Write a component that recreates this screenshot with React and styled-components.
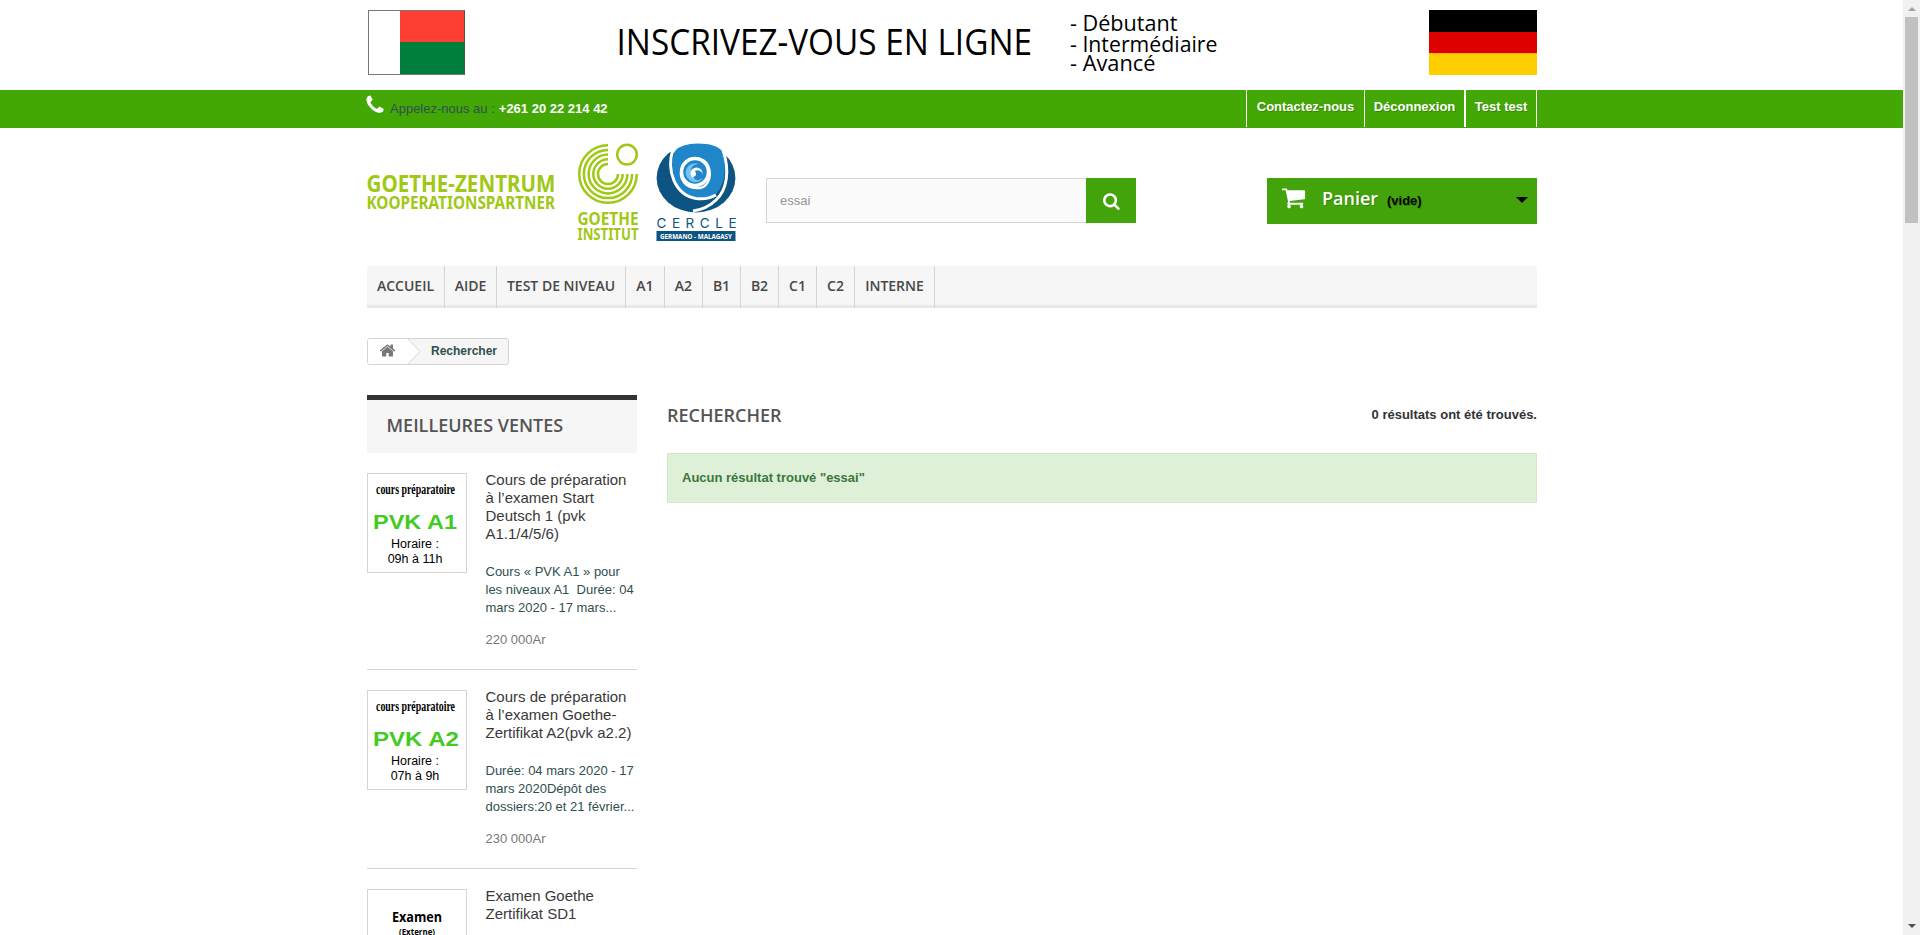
import React from "react";
import styled, { createGlobalStyle } from "styled-components";

const sans = `"Liberation Sans", Arial, Helvetica, sans-serif`;
const display = `"Open Sans", "Noto Sans", sans-serif`;

const GlobalStyle = createGlobalStyle`
  * { box-sizing: border-box; }
  body { margin: 0; background: #fff; font: normal 13px/18px ${sans}; color: #2f4f4f; overflow: hidden; }
  h1, h2, h3, p, ul { margin: 0; padding: 0; font-weight: normal; }
  svg { display: block; }
`;

const Viewport = styled.div`
  display: flex;
  height: 935px;
  overflow: hidden;
`;
const Page = styled.div`
  flex: 1;
  min-width: 0;
`;
const Container = styled.div`
  width: 1170px;
  margin-left: 367px;
`;

/* Banner */
const BannerRow = styled(Container)`
  display: flex;
  height: 90px;
  padding: 10px 0 0 1px;
`;
const MadagascarFlag = styled.div`
  width: 97px;
  height: 65px;
  border: 1px solid #777;
  border-right-color: #3f5f3a;
  background: linear-gradient(#ff3f34 50%, #007f3c 50%) 31px 0 no-repeat #fff;
`;
const GermanFlag = styled.div`
  width: 108px;
  height: 65px;
  margin-left: auto;
  background: linear-gradient(#000 0 22px, #de0000 22px 43px, #ffb400 43px 44px, #ffce00 44px);
`;
const BannerText = styled.svg`
  width: 620px;
  height: 75px;
  margin-left: 146px;
  overflow: visible;
  font-family: "Open Sans", "Noto Sans", sans-serif;
`;

/* Top bar */
const TopBar = styled.div`
  height: 38px;
  background: #43a705;
`;
const TopBarRow = styled(Container)`
  display: flex;
  justify-content: space-between;
`;
const Phone = styled.div`
  display: flex;
  height: 38px;
  line-height: 38px;
  svg { margin: 4px 4px 0 -3px; }
  b { margin-left: 4px; color: #fff; }
`;
const UserLinks = styled.nav`
  display: flex;
  height: 37px;
  border-left: 1px solid #fff;
`;
const UserLink = styled.a`
  width: ${(p) => p.$width}px;
  border-right: ${(p) => p.$edge || 1}px solid #fff;
  color: #fff;
  font-weight: bold;
  line-height: 33px;
  text-align: center;
  white-space: nowrap;
  text-shadow: 1px 1px rgba(0, 0, 0, 0.2);
`;

/* Header */
const HeaderRow = styled(Container)`
  display: flex;
  height: 138px;
`;
const Logo = styled.svg`
  width: 375px;
  height: 104px;
  margin-top: 12px;
  font-family: "Noto Sans", "Open Sans", sans-serif;
`;
const SearchForm = styled.div`
  display: flex;
  width: 370px;
  height: 45px;
  margin: 50px 0 0 24px;
`;
const SearchField = styled.div`
  flex: 1;
  padding-left: 13px;
  border: 1px solid #d6d4d4;
  border-right: 0;
  background: #fbfbfb;
  color: #959595;
  line-height: 43px;
`;
const SearchButton = styled.div`
  display: flex;
  align-items: center;
  justify-content: center;
  width: 50px;
  padding-left: 2px;
  background: #43a30a;
`;
const Cart = styled.div`
  display: flex;
  align-items: flex-start;
  width: 270px;
  height: 46px;
  margin: 50px 0 0 auto;
  padding: 0 9px 0 14px;
  background: #43a30a;
  text-shadow: 1px 1px rgba(0, 0, 0, 0.2);
`;
const CartIcon = styled.div`
  width: 41px;
  padding-top: 7px;
`;
const CartTitle = styled.b`
  width: 65px;
  color: #fff;
  font: 600 18px/40px ${display};
`;
const CartStatus = styled.b`
  flex: 1;
  color: #000;
  line-height: 45px;
`;
const Caret = styled.div`
  margin-top: 19px;
  border: 6px solid transparent;
  border-top: 6px solid #000;
  border-bottom: 0;
`;

/* Menu */
const Menu = styled(Container)`
  display: flex;
  height: 42px;
  background: #f6f6f6;
  box-shadow: inset 0 -3px #e9e9e9;
`;
const MenuItem = styled.a`
  width: ${(p) => p.$width}px;
  border-right: 1px solid #d6d4d4;
  color: #484848;
  font: 600 14px/40px ${display};
  text-align: center;
  white-space: nowrap;
`;

/* Breadcrumb */
const Crumbs = styled.div`
  display: flex;
  width: 142px;
  height: 27px;
  margin: 30px 0 0 367px;
  overflow: hidden;
  border: 1px solid #d6d4d4;
  border-radius: 3px;
  background: #f6f6f6;
`;
const HomeCrumb = styled.div`
  display: flex;
  width: 40px;
  padding: 3px 0 0 11px;
  background: #fff;
`;
const CurrentCrumb = styled.b`
  margin-left: 10px;
  font-size: 12px;
  line-height: 25px;
`;

/* Columns */
const Columns = styled(Container)`
  display: grid;
  grid-template-columns: 270px 870px;
  gap: 30px;
  margin-top: 30px;
`;
const BlockTitle = styled.h2`
  height: 58px;
  margin-bottom: 20px;
  padding-left: 19.5px;
  border-top: 5px solid #333;
  background: #f6f6f6;
  color: #555454;
  font: 600 18px/51px ${display};
`;
const Product = styled.article`
  display: flex;
  gap: 18.5px;
  margin-bottom: 20px;
  padding-bottom: 20px;
  border-bottom: 1px solid #d6d4d4;
`;
const Thumb = styled.svg`
  flex: none;
  width: 100px;
  height: 100px;
  border: 1px solid #d6d4d4;
`;
const ProductInfo = styled.div`
  width: 151px;
  margin-top: -2px;
  white-space: nowrap;
`;
const ProductTitle = styled.h3`
  margin-bottom: 20px;
  color: #3a3939;
  font-size: 15px;
  line-height: 18px;
`;
const ProductText = styled.p`
  margin-bottom: 14px;
  white-space: pre;
`;
const Price = styled.p`
  color: #777;
`;
const Heading = styled.div`
  display: flex;
  justify-content: space-between;
  height: 58px;
`;
const HeadingTitle = styled.h1`
  color: #555454;
  font: 600 18px/41px ${display};
`;
const HeadingCount = styled.b`
  color: #333;
  line-height: 39px;
`;
const Alert = styled.p`
  height: 50px;
  padding-left: 14px;
  border: 1px solid #d6e9c6;
  background: #dff0d8;
  color: #3c763d;
  font-weight: bold;
  line-height: 47px;
`;

/* Scrollbar */
const Scrollbar = styled.div`
  display: flex;
  flex-direction: column;
  align-items: center;
  width: 17px;
  padding: 7px 0;
  background: #f1f1f1;
`;
const ScrollThumb = styled.div`
  width: 13px;
  height: 206px;
  margin: 6px 0 auto;
  background: #c1c1c1;
`;
const ArrowUp = styled.div`
  border: 4px solid transparent;
  border-top: 0;
  border-bottom-color: #a3a3a3;
`;
const ArrowDown = styled.div`
  border: 4px solid transparent;
  border-bottom: 0;
  border-top-color: #505050;
`;

const ICONS = {
  phone: "M1600 1240q0 27-10 70.5t-21 68.5q-21 50-122 106-94 51-186 51-27 0-53-3.5t-57.5-12.5-47-14.5-55.5-20.5-49-18q-98-35-175-83-127-79-264-216t-216-264q-48-77-83-175-3-9-18-49t-20.5-55.5-14.5-47-12.5-57.5-3.5-53q0-92 51-186 56-101 106-122 25-11 68.5-21t70.5-10q14 0 21 3 18 6 53 76 11 19 30 54t35 63.5 31 53.5q3 4 17.5 25t21.5 35.5 7 28.5q0 20-28.5 50t-62 55-62 53-28.5 46q0 9 5 22.5t8.5 20.5 14 24 11.5 19q76 137 174 235t235 174q2 1 19 11.5t24 14 20.5 8.5 22.5 5q18 0 46-28.5t53-62 55-62 50-28.5q14 0 28.5 7t35.5 21.5 25 17.5q25 15 53.5 31t63.5 35 54 30q70 35 76 53 3 7 3 21z",
  search: "M1152 832q0-185-131.5-316.5t-316.5-131.5-316.5 131.5-131.5 316.5 131.5 316.5 316.5 131.5 316.5-131.5 131.5-316.5zm512 832q0 52-38 90t-90 38q-54 0-90-38l-343-342q-179 124-399 124-143 0-273.5-55.5t-225-150-150-225-55.5-273.5 55.5-273.5 150-225 225-150 273.5-55.5 273.5 55.5 225 150 150 225 55.5 273.5q0 220-124 399l343 343q37 37 37 90z",
  home: "M1472 992v480q0 26-19 45t-45 19h-384v-384h-256v384h-384q-26 0-45-19t-19-45v-480q0-1 .5-3t.5-3l575-474 575 474q1 2 1 6zm223-69l-62 74q-8 9-21 11h-3q-13 0-21-7l-692-577-692 577q-12 8-24 7-13-2-21-11l-62-74q-8-10-7-23.5t11-21.5l719-599q32-26 76-26t76 26l244 204v-195q0-14 9-23t23-9h192q14 0 23 9t9 23v408l219 182q10 8 11 21.5t-7 23.5z",
  cart: "M704 1536q0 52-38 90t-90 38-90-38-38-90 38-90 90-38 90 38 38 90zm896 0q0 52-38 90t-90 38-90-38-38-90 38-90 90-38 90 38 38 90zm128-1088v512q0 24-16.5 42.5t-40.5 21.5l-1044 122q13 60 13 70 0 16-24 64h920q26 0 45 19t19 45-19 45-45 19h-1024q-26 0-45-19t-19-45q0-11 8-31.5t16-36 21.5-40 15.5-29.5l-177-823h-204q-26 0-45-19t-19-45 19-45 45-19h256q16 0 28.5 6.5t19.5 15.5 13 24.5 8 26 5.5 29.5 4.5 26h1201q26 0 45 19t19 45z",
};

const Icon = ({ name, size, color = "#fff" }) => (
  <svg width={size} height={size} viewBox="0 0 1792 1792" fill={color}>
    <path d={ICONS[name]} />
  </svg>
);

const FitText = ({ width, children, ...rest }) => (
  <text textLength={width} lengthAdjust="spacingAndGlyphs" {...rest}>{children}</text>
);

const BannerSlogan = () => (
  <BannerText viewBox="0 0 620 75">
    <FitText x="5.5" y="45" fontSize="36" width="415.5">INSCRIVEZ-VOUS EN LIGNE</FitText>
    <FitText x="459" y="21" fontSize="22.5" width="107.5">- Débutant</FitText>
    <FitText x="459" y="42" fontSize="22.5" width="147.5">- Intermédiaire</FitText>
    <FitText x="459" y="61" fontSize="22.5" width="85.5">- Avancé</FitText>
  </BannerText>
);

const ShopLogo = () => (
  <Logo viewBox="0 0 375 104">
    <g fill="#a0c814" fontWeight="700">
      <FitText x="-0.5" y="52" fontSize="23" width="189">GOETHE-ZENTRUM</FitText>
      <FitText x="-0.5" y="68.5" fontSize="17.5" width="188.5">KOOPERATIONSPARTNER</FitText>
      <FitText x="210.5" y="84.5" fontSize="17" width="61">GOETHE</FitText>
      <FitText x="210.5" y="100" fontSize="16" width="61">INSTITUT</FitText>
    </g>
    <g fill="none" stroke="#a0c814" strokeWidth="2.5">
      {[10, 14.7, 19.4, 24.1, 28.8].map((r) => (
        <path key={r} d={`M241 ${34 - r}A${r} ${r} 0 1 0 ${241 + r} 34`} />
      ))}
      <circle cx="260" cy="14.6" r="9.8" />
    </g>
    <ellipse cx="329" cy="38" rx="39.4" ry="34.5" fill="#0e5482" />
    <path d="M298 0h63v11l-5 2q-24-10-50 0l-8-3z" fill="#fff" />
    <path d="M308 11Q314 3.5 331 3.5Q349 3.5 355 11C361 29 357 50 345 57Q329 62 316 51C305 41 303 24 308 11Z" fill="#1f87c9" />
    <g fill="none" stroke="#fff">
      <path d="M306 9C299 31 308 55 329 58.5Q340 60 349 55" strokeWidth="3" />
      <path d="M356 10C363 31 360 50 349 60Q340 69 326 71" strokeWidth="3" />
      <path d="M316 25C310 39 319 49 333 48C345 46 346 26 336 20" strokeWidth="2.5" />
      <circle cx="328" cy="32" r="13.5" strokeWidth="3.5" />
    </g>
    <path d="M332 24A9.5 9.5 0 1 0 336 38A9 9 0 0 1 324 29Q326 24 332 24Z" fill="#72c5f0" />
    <circle cx="329.5" cy="33.5" r="6" fill="#fff" />
    <path d="M328 31A5 5 0 1 1 326 37Q331 36 328 31Z" fill="#1f87c9" />
    <g fill="#0e5482">
      <text x="289.5" y="87.5" fontSize="13.5" textLength="80" fontFamily="Inter, Lato, sans-serif">CERCLE</text>
      <rect x="289.5" y="91" width="79" height="10" />
    </g>
    <FitText x="293" y="98.5" fontSize="6.5" fontWeight="700" fill="#fff" width="72">GERMANO - MALAGASY</FitText>
  </Logo>
);

const CourseThumb = ({ level, levelWidth, hours }) => (
  <Thumb viewBox="0 0 98 98" fontFamily="Liberation Sans, Arial, sans-serif">
    <FitText x="8" y="20" fontSize="15.5" fontWeight="700" fontFamily="Liberation Serif, serif" width="79">cours préparatoire</FitText>
    <FitText x="5" y="55" fontSize="21" fontWeight="700" fill="#43cb24" width={levelWidth}>{level}</FitText>
    <text x="47" y="73.5" fontSize="12.5" textAnchor="middle">Horaire :</text>
    <text x="47" y="88.5" fontSize="12.5" textAnchor="middle">{hours}</text>
  </Thumb>
);

const ExamThumb = () => (
  <Thumb viewBox="0 0 98 98" fontFamily="Open Sans, Noto Sans, sans-serif" fontWeight="700">
    <FitText x="24" y="32" fontSize="13.5" width="50">Examen</FitText>
    <FitText x="31" y="45" fontSize="8.5" width="36">(Externe)</FitText>
  </Thumb>
);

const MENU = [
  ["ACCUEIL", 78], ["AIDE", 52], ["TEST DE NIVEAU", 129], ["A1", 39], ["A2", 38],
  ["B1", 38], ["B2", 38], ["C1", 38], ["C2", 38], ["INTERNE", 80],
];

const PRODUCTS = [
  {
    thumb: <CourseThumb level="PVK A1" levelWidth="84" hours="09h à 11h" />,
    title: ["Cours de préparation", "à l’examen Start", "Deutsch 1 (pvk", "A1.1/4/5/6)"],
    text: "Cours « PVK A1 » pour\nles niveaux A1  Durée: 04\nmars 2020 - 17 mars...",
    price: "220 000Ar",
  },
  {
    thumb: <CourseThumb level="PVK A2" levelWidth="86" hours="07h à 9h" />,
    title: ["Cours de préparation", "à l’examen Goethe-", "Zertifikat A2(pvk a2.2)"],
    text: "Durée: 04 mars 2020 - 17\nmars 2020Dépôt des\ndossiers:20 et 21 février...",
    price: "230 000Ar",
  },
  { thumb: <ExamThumb />, title: ["Examen Goethe", "Zertifikat SD1"] },
];

export default function App() {
  return (
    <Viewport>
      <GlobalStyle />
      <Page>
        <BannerRow>
          <MadagascarFlag />
          <BannerSlogan />
          <GermanFlag />
        </BannerRow>
        <TopBar>
          <TopBarRow>
            <Phone>
              <Icon name="phone" size={22} />
              Appelez-nous au : <b>+261 20 22 214 42</b>
            </Phone>
            <UserLinks>
              <UserLink $width={118}>Contactez-nous</UserLink>
              <UserLink $width={101} $edge={2}>Déconnexion</UserLink>
              <UserLink $width={71}>Test test</UserLink>
            </UserLinks>
          </TopBarRow>
        </TopBar>
        <HeaderRow>
          <ShopLogo />
          <SearchForm>
            <SearchField>essai</SearchField>
            <SearchButton><Icon name="search" size={18} /></SearchButton>
          </SearchForm>
          <Cart>
            <CartIcon><Icon name="cart" size={25} /></CartIcon>
            <CartTitle>Panier</CartTitle>
            <CartStatus>(vide)</CartStatus>
            <Caret />
          </Cart>
        </HeaderRow>
        <Menu>
          {MENU.map(([label, width]) => (
            <MenuItem key={label} $width={width}>{label}</MenuItem>
          ))}
        </Menu>
        <Crumbs>
          <HomeCrumb><Icon name="home" size={17} color="#777" /></HomeCrumb>
          <svg width="13" height="25" viewBox="0 0 13 25">
            <path d="M0 0L12 12.5L0 25" fill="#fff" stroke="#d6d4d4" />
          </svg>
          <CurrentCrumb>Rechercher</CurrentCrumb>
        </Crumbs>
        <Columns>
          <aside>
            <BlockTitle>MEILLEURES VENTES</BlockTitle>
            {PRODUCTS.map((p) => (
              <Product key={p.title.join()}>
                {p.thumb}
                <ProductInfo>
                  <ProductTitle>
                    {p.title.map((line) => <div key={line}>{line}</div>)}
                  </ProductTitle>
                  {p.text && <ProductText>{p.text}</ProductText>}
                  {p.price && <Price>{p.price}</Price>}
                </ProductInfo>
              </Product>
            ))}
          </aside>
          <main>
            <Heading>
              <HeadingTitle>RECHERCHER</HeadingTitle>
              <HeadingCount>0 résultats ont été trouvés.</HeadingCount>
            </Heading>
            <Alert>Aucun résultat trouvé "essai"</Alert>
          </main>
        </Columns>
      </Page>
      <Scrollbar>
        <ArrowUp />
        <ScrollThumb />
        <ArrowDown />
      </Scrollbar>
    </Viewport>
  );
}
